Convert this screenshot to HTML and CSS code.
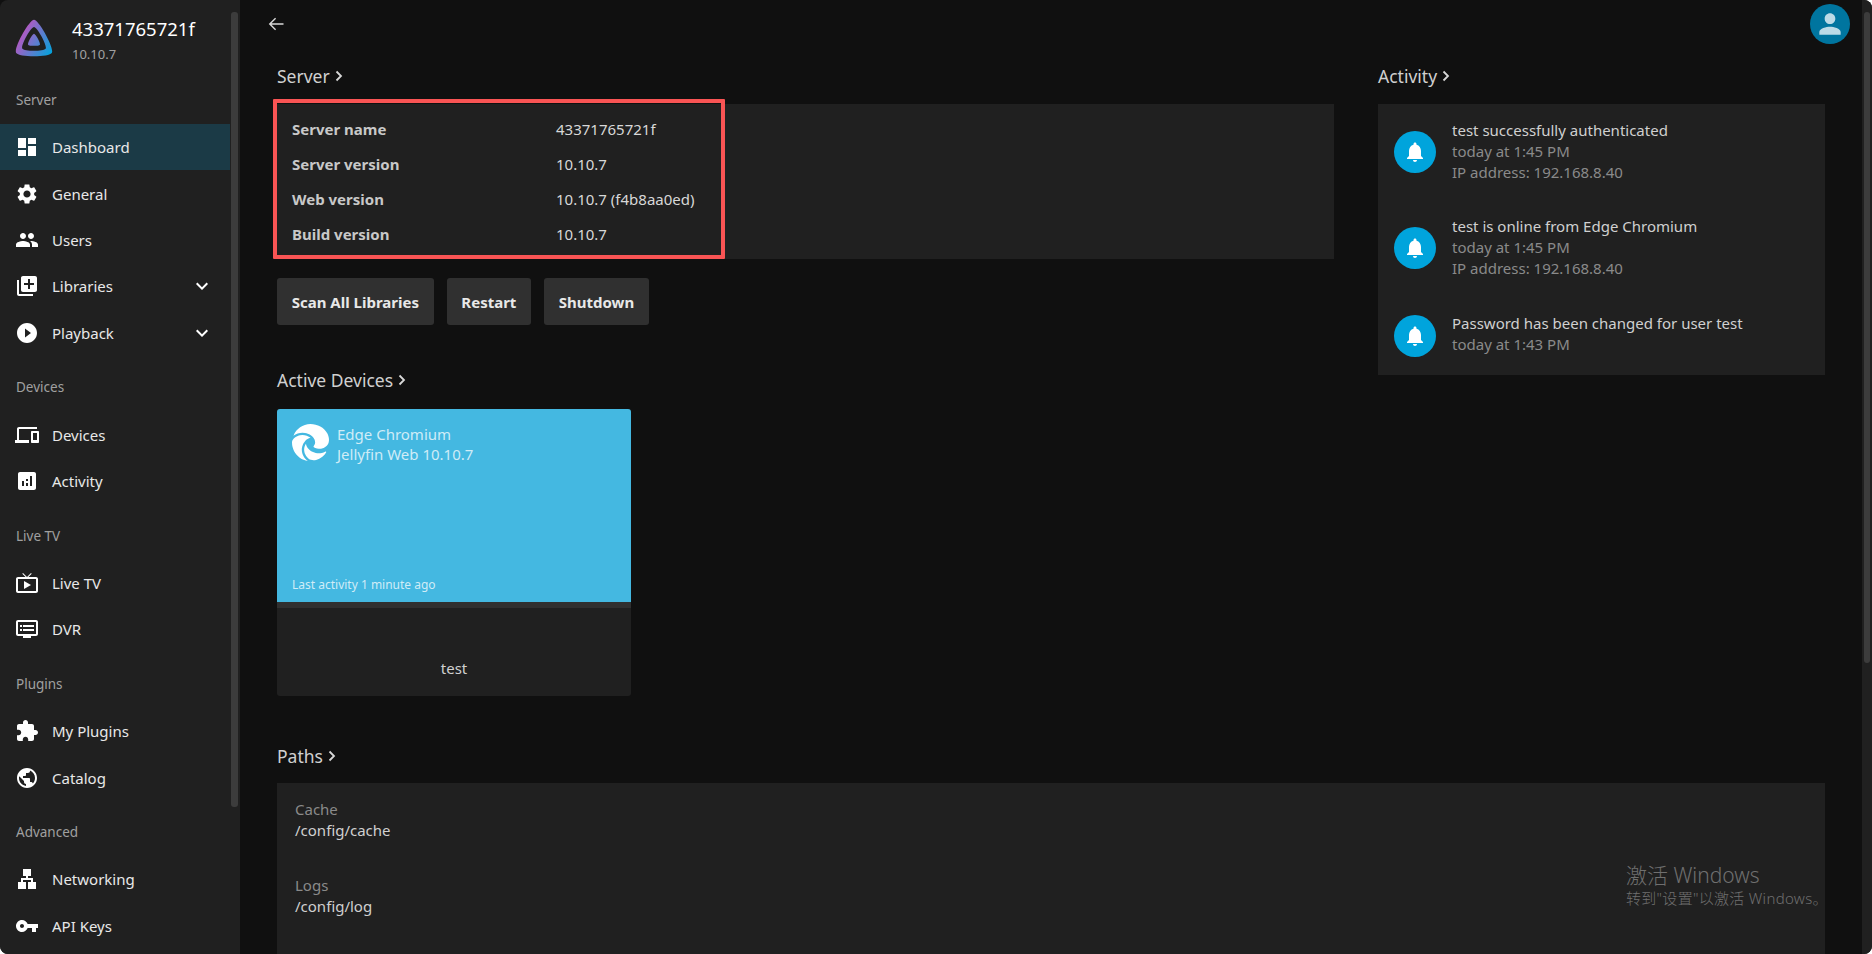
FILE: index.html
```html
<!DOCTYPE html>
<html lang="en">
<head>
    <meta charset="UTF-8">
    <title>Dashboard</title>
    <link rel="stylesheet" href="styles.css">
</head>
<body>
    <div class="app">
        <aside class="sidebar">
            <div class="sidebar-scroll">
                <div class="brand">
                    <svg class="brand-logo" viewBox="0 0 512 512">
                        <defs>
                            <linearGradient id="jf" gradientUnits="userSpaceOnUse" x1="110" y1="220" x2="495" y2="440">
                                <stop offset="0" stop-color="#aa5cc3"/>
                                <stop offset="1" stop-color="#00a4dc"/>
                            </linearGradient>
                        </defs>
                        <path fill="url(#jf)" d="M256 201.6c-20.4 0-86.2 119.3-76.2 139.4s142.5 19.9 152.4 0S276.5 201.6 256 201.6z"/>
                        <path fill="url(#jf)" d="M256 23.3c-61.6 0-259.8 359.4-229.6 420.1s429.3 60 459.2 0S317.6 23.3 256 23.3zM406.5 390.8c-19.6 39.3-281.1 39.8-300.9 0s110.1-275.3 150.4-275.3 170.1 235.9 150.5 275.3z"/>
                    </svg>
                    <div>
                        <div class="brand-name">43371765721f</div>
                        <div class="brand-version">10.10.7</div>
                    </div>
                </div>

                <div class="nav-group">
                    <div class="nav-title">Server</div>
                    <a class="nav-item selected"><svg viewBox="0 0 24 24"><path d="M3 13h8V3H3v10zm0 8h8v-6H3v6zm10 0h8V11h-8v10zm0-18v6h8V3h-8z"/></svg>Dashboard</a>
                    <a class="nav-item"><svg viewBox="0 0 24 24"><path d="M19.14 12.94c.04-.3.06-.61.06-.94 0-.32-.02-.64-.07-.94l2.03-1.58c.18-.14.23-.41.12-.61l-1.92-3.32c-.12-.22-.37-.29-.59-.22l-2.39.96c-.5-.38-1.03-.7-1.62-.94l-.36-2.54c-.04-.24-.24-.41-.48-.41h-3.84c-.24 0-.43.17-.47.41l-.36 2.54c-.59.24-1.13.57-1.62.94l-2.39-.96c-.22-.08-.47 0-.59.22L2.74 8.87c-.12.21-.08.47.12.61l2.03 1.58c-.05.3-.09.63-.09.94s.02.64.07.94l-2.03 1.58c-.18.14-.23.41-.12.61l1.92 3.32c.12.22.37.29.59.22l2.39-.96c.5.38 1.03.7 1.62.94l.36 2.54c.05.24.24.41.48.41h3.84c.24 0 .44-.17.47-.41l.36-2.54c.59-.24 1.13-.56 1.62-.94l2.39.96c.22.08.47 0 .59-.22l1.92-3.32c.12-.22.07-.47-.12-.61l-2.01-1.58zM12 15.6c-1.98 0-3.6-1.62-3.6-3.6s1.62-3.6 3.6-3.6 3.6 1.62 3.6 3.6-1.62 3.6-3.6 3.6z"/></svg>General</a>
                    <a class="nav-item"><svg viewBox="0 0 24 24"><path d="M16 11c1.66 0 2.99-1.34 2.99-3S17.66 5 16 5c-1.66 0-3 1.34-3 3s1.34 3 3 3zm-8 0c1.66 0 2.99-1.34 2.99-3S9.66 5 8 5C6.34 5 5 6.34 5 8s1.34 3 3 3zm0 2c-2.33 0-7 1.17-7 3.5V19h14v-2.5c0-2.33-4.67-3.5-7-3.5zm8 0c-.29 0-.62.02-.97.05 1.16.84 1.97 1.97 1.97 3.45V19h6v-2.5c0-2.33-4.67-3.5-7-3.5z"/></svg>Users</a>
                    <a class="nav-item"><svg viewBox="0 0 24 24"><path d="M4 6H2v14c0 1.1.9 2 2 2h14v-2H4V6zm16-4H8c-1.1 0-2 .9-2 2v12c0 1.1.9 2 2 2h12c1.1 0 2-.9 2-2V4c0-1.1-.9-2-2-2zm-1 9h-4v4h-2v-4H9V9h4V5h2v4h4v2z"/></svg>Libraries<svg class="nav-expand" viewBox="0 0 24 24"><path d="M16.59 8.59 12 13.17 7.41 8.59 6 10l6 6 6-6z"/></svg></a>
                    <a class="nav-item"><svg viewBox="0 0 24 24"><path d="M12 2C6.48 2 2 6.48 2 12s4.48 10 10 10 10-4.48 10-10S17.52 2 12 2zm-2 14.5v-9l6 4.5-6 4.5z"/></svg>Playback<svg class="nav-expand" viewBox="0 0 24 24"><path d="M16.59 8.59 12 13.17 7.41 8.59 6 10l6 6 6-6z"/></svg></a>
                </div>

                <div class="nav-group">
                    <div class="nav-title">Devices</div>
                    <a class="nav-item"><svg viewBox="0 0 24 24"><path d="M4 6h18V4H4c-1.1 0-2 .9-2 2v11H0v3h14v-3H4V6zm19 2h-6c-.55 0-1 .45-1 1v10c0 .55.45 1 1 1h6c.55 0 1-.45 1-1V9c0-.55-.45-1-1-1zm-1 9h-4v-7h4v7z"/></svg>Devices</a>
                    <a class="nav-item"><svg viewBox="0 0 24 24"><path d="M19 3H5c-1.1 0-2 .9-2 2v14c0 1.1.9 2 2 2h14c1.1 0 2-.9 2-2V5c0-1.1-.9-2-2-2zM9 17H7v-5h2v5zm4 0h-2v-3h2v3zm0-5h-2v-2h2v2zm4 5h-2V7h2v10z"/></svg>Activity</a>
                </div>

                <div class="nav-group">
                    <div class="nav-title">Live TV</div>
                    <a class="nav-item"><svg viewBox="0 0 24 24"><path d="M21 6h-7.59l3.29-3.29L16 2l-4 4-4-4-.71.71L10.59 6H3c-1.1 0-2 .89-2 2v12c0 1.1.9 2 2 2h18c1.1 0 2-.9 2-2V8c0-1.11-.9-2-2-2zm0 14H3V8h18v12zM9 10v8l7-4z"/></svg>Live TV</a>
                    <a class="nav-item"><svg viewBox="0 0 24 24"><path d="M21 3H3c-1.1 0-2 .9-2 2v12c0 1.1.9 2 2 2h5v2h8v-2h5c1.1 0 1.99-.9 1.99-2L23 5c0-1.1-.9-2-2-2zm0 14H3V5h18v12zm-2-9H8v2h11V8zm0 4H8v2h11v-2zM7 8H5v2h2V8zm0 4H5v2h2v-2z"/></svg>DVR</a>
                </div>

                <div class="nav-group">
                    <div class="nav-title">Plugins</div>
                    <a class="nav-item"><svg viewBox="0 0 24 24"><path d="M20.5 11H19V7c0-1.1-.9-2-2-2h-4V3.5C13 2.12 11.88 1 10.5 1S8 2.12 8 3.5V5H4c-1.1 0-1.99.9-1.99 2v3.8H3.5c1.49 0 2.7 1.21 2.7 2.7s-1.21 2.7-2.7 2.7H2V20c0 1.1.9 2 2 2h3.8v-1.5c0-1.49 1.21-2.7 2.7-2.7 1.49 0 2.7 1.21 2.7 2.7V22H17c1.1 0 2-.9 2-2v-4h1.5c1.38 0 2.5-1.12 2.5-2.5S21.88 11 20.5 11z"/></svg>My Plugins</a>
                    <a class="nav-item"><svg viewBox="0 0 24 24"><path d="M12 2C6.48 2 2 6.48 2 12s4.48 10 10 10 10-4.48 10-10S17.52 2 12 2zm-1 17.93c-3.95-.49-7-3.85-7-7.93 0-.62.08-1.21.21-1.79L9 15v1c0 1.1.9 2 2 2v1.93zm6.9-2.54c-.26-.81-1-1.39-1.9-1.39h-1v-3c0-.55-.45-1-1-1H8v-2h2c.55 0 1-.45 1-1V7h2c1.1 0 2-.9 2-2v-.41c2.93 1.19 5 4.06 5 7.41 0 2.08-.8 3.97-2.1 5.39z"/></svg>Catalog</a>
                </div>

                <div class="nav-group">
                    <div class="nav-title">Advanced</div>
                    <a class="nav-item"><svg viewBox="0 0 24 24"><path d="M13 22h8v-7h-3v-4h-5V9h3V2H8v7h3v2H6v4H3v7h8v-7H8v-2h8v2h-3z"/></svg>Networking</a>
                    <a class="nav-item"><svg viewBox="0 0 24 24"><path d="M12.65 10C11.83 7.67 9.61 6 7 6c-3.31 0-6 2.69-6 6s2.69 6 6 6c2.61 0 4.83-1.67 5.65-4H17v4h4v-4h2v-4H12.65zM7 14c-1.1 0-2-.9-2-2s.9-2 2-2 2 .9 2 2-.9 2-2 2z"/></svg>API Keys</a>
                </div>
            </div>
            <div class="scrollbar scrollbar-nav"><div class="scrollbar-thumb"></div></div>
        </aside>

        <main class="main">
            <div class="content">
                <header class="topbar">
                    <svg class="back-icon" viewBox="0 0 24 24"><path d="M21 12H4.5M11.5 5l-7 7 7 7"/></svg>
                    <div class="avatar"><svg viewBox="0 0 24 24"><path d="M12 12c2.21 0 4-1.79 4-4s-1.79-4-4-4-4 1.79-4 4 1.79 4 4 4zm0 2c-2.67 0-8 1.34-8 4v2h16v-2c0-2.66-5.33-4-8-4z"/></svg></div>
                </header>

                <div class="columns">
                    <div class="col-left">
                        <h3 class="section-title">Server <svg class="chev" viewBox="0 0 10 12"><path d="M2.5 1.5 7 6l-4.5 4.5"/></svg></h3>
                        <div class="card info-card">
                            <div class="info-row"><b>Server name</b><span>43371765721f</span></div>
                            <div class="info-row"><b>Server version</b><span>10.10.7</span></div>
                            <div class="info-row"><b>Web version</b><span>10.10.7 (f4b8aa0ed)</span></div>
                            <div class="info-row"><b>Build version</b><span>10.10.7</span></div>
                            <div class="highlight"></div>
                        </div>
                        <div class="button-row">
                            <button>Scan All Libraries</button>
                            <button>Restart</button>
                            <button>Shutdown</button>
                        </div>

                        <h3 class="section-title devices-title">Active Devices <svg class="chev" viewBox="0 0 10 12"><path d="M2.5 1.5 7 6l-4.5 4.5"/></svg></h3>
                        <div class="device-card">
                            <div class="device-top">
                                <div class="device-head">
                                    <svg class="edge-logo" viewBox="0 0 24 24"><path d="M21.86 17.86q.14 0 .25.12.1.13.1.25t-.11.33l-.32.46-.43.53-.44.5q-.21.25-.38.42l-.22.23q-.58.53-1.34 1.04-.76.51-1.6.91-.86.4-1.74.64t-1.67.24q-.9 0-1.69-.28-.8-.28-1.48-.78-.68-.5-1.22-1.17-.53-.66-.92-1.44-.38-.77-.58-1.6-.2-.83-.2-1.67 0-1 .32-1.96.33-.97.87-1.8.14.95.55 1.77.41.82 1.02 1.5.6.68 1.38 1.21.78.54 1.64.9.86.36 1.77.56.92.2 1.8.2 1.12 0 2.18-.24 1.06-.23 2.06-.72l.2-.1.2-.05zm-15.5-1.27q0 1.1.27 2.15.27 1.06.78 2.03.51.96 1.24 1.77.74.82 1.66 1.4-1.47-.2-2.8-.74-1.33-.55-2.48-1.37-1.15-.83-2.08-1.9-.92-1.07-1.58-2.33T.36 14.94Q0 13.54 0 12.06q0-.81.32-1.49.31-.68.83-1.23.53-.55 1.2-.96.66-.4 1.35-.66.74-.27 1.5-.39.78-.12 1.55-.12.7 0 1.42.1.72.12 1.4.35.68.23 1.32.57.63.35 1.16.83-.35 0-.7.07-.33.07-.65.23v-.02q-.63.28-1.2.74-.57.46-1.05 1.04-.48.58-.87 1.26-.38.67-.65 1.39-.27.71-.42 1.44-.15.72-.15 1.38zM11.96.06q1.7 0 3.33.39 1.63.38 3.07 1.15 1.43.77 2.62 1.93 1.18 1.16 1.98 2.7.49.94.76 1.96.28 1 .28 2.08 0 .89-.23 1.7-.24.8-.69 1.48-.45.68-1.1 1.22-.64.53-1.45.88-.54.24-1.11.36-.58.13-1.16.13-.42 0-.97-.03-.54-.03-1.1-.12-.55-.1-1.05-.28-.5-.19-.84-.5-.12-.09-.23-.24-.1-.16-.1-.33 0-.15.16-.35.16-.2.35-.5.2-.28.36-.68.16-.4.16-.95 0-1.06-.4-1.96-.4-.91-1.06-1.64-.66-.74-1.52-1.28-.86-.55-1.79-.89-.84-.3-1.72-.44-.87-.14-1.76-.14-1.55 0-3.06.45T.94 7.55q.71-1.74 1.81-3.13 1.1-1.38 2.52-2.35Q6.68 1.1 8.37.58q1.7-.52 3.58-.52Z"/></svg>
                                    <div class="device-text">
                                        <div>Edge Chromium</div>
                                        <div>Jellyfin Web 10.10.7</div>
                                    </div>
                                </div>
                                <div class="device-activity">Last activity 1 minute ago</div>
                            </div>
                            <div class="device-progress"></div>
                            <div class="device-user">test</div>
                        </div>
                    </div>

                    <div class="col-right">
                        <h3 class="section-title">Activity <svg class="chev" viewBox="0 0 10 12"><path d="M2.5 1.5 7 6l-4.5 4.5"/></svg></h3>
                        <div class="card activity-card">
                            <div class="activity-item">
                                <div class="bell"><svg viewBox="0 0 24 24"><path d="M12 22c1.1 0 2-.9 2-2h-4c0 1.1.89 2 2 2zm6-6v-5c0-3.07-1.64-5.64-4.5-6.32V4c0-.83-.67-1.5-1.5-1.5s-1.5.67-1.5 1.5v.68C7.63 5.36 6 7.92 6 11v5l-2 2v1h16v-1l-2-2z"/></svg></div>
                                <div class="activity-text">
                                    <div>test successfully authenticated</div>
                                    <div class="muted">today at 1:45 PM</div>
                                    <div class="muted">IP address: 192.168.8.40</div>
                                </div>
                            </div>
                            <div class="activity-item">
                                <div class="bell"><svg viewBox="0 0 24 24"><path d="M12 22c1.1 0 2-.9 2-2h-4c0 1.1.89 2 2 2zm6-6v-5c0-3.07-1.64-5.64-4.5-6.32V4c0-.83-.67-1.5-1.5-1.5s-1.5.67-1.5 1.5v.68C7.63 5.36 6 7.92 6 11v5l-2 2v1h16v-1l-2-2z"/></svg></div>
                                <div class="activity-text">
                                    <div>test is online from Edge Chromium</div>
                                    <div class="muted">today at 1:45 PM</div>
                                    <div class="muted">IP address: 192.168.8.40</div>
                                </div>
                            </div>
                            <div class="activity-item">
                                <div class="bell"><svg viewBox="0 0 24 24"><path d="M12 22c1.1 0 2-.9 2-2h-4c0 1.1.89 2 2 2zm6-6v-5c0-3.07-1.64-5.64-4.5-6.32V4c0-.83-.67-1.5-1.5-1.5s-1.5.67-1.5 1.5v.68C7.63 5.36 6 7.92 6 11v5l-2 2v1h16v-1l-2-2z"/></svg></div>
                                <div class="activity-text">
                                    <div>Password has been changed for user test</div>
                                    <div class="muted">today at 1:43 PM</div>
                                </div>
                            </div>
                        </div>
                    </div>
                </div>

                <h3 class="section-title paths-title">Paths <svg class="chev" viewBox="0 0 10 12"><path d="M2.5 1.5 7 6l-4.5 4.5"/></svg></h3>
                <div class="card paths-card">
                    <div class="path-item">
                        <div class="muted">Cache</div>
                        <div>/config/cache</div>
                    </div>
                    <div class="path-item">
                        <div class="muted">Logs</div>
                        <div>/config/log</div>
                    </div>
                </div>
            </div>
            <div class="scrollbar scrollbar-main"><div class="scrollbar-thumb"></div></div>
        </main>

        <div class="watermark">
            <div class="watermark-title">激活 Windows</div>
            <div class="watermark-sub">转到"设置"以激活 Windows。</div>
        </div>
    </div>
</body>
</html>
```

FILE: styles.css
```css
* {
    box-sizing: border-box;
}
html, body {
    height: 100%;
    margin: 0;
    background: #fff;
}
body {
    font-family: "Noto Sans", sans-serif;
    font-size: 15px;
    color: #e0e0e0;
    overflow: hidden;
}
.app {
    position: relative;
    display: flex;
    height: 954px;
    overflow: hidden;
    border-radius: 0 8px 8px 8px;
    background: #101010;
}

/* sidebar */
.sidebar {
    display: flex;
    flex: 0 0 240px;
    border-top-left-radius: 8px;
    background: #202020;
}
.sidebar-scroll {
    flex: 0 0 230px;
    overflow: hidden;
}
.brand {
    display: flex;
    align-items: center;
    height: 68.5px;
    padding: 8px 0 0 14px;
    color: #fff;
}
.brand-logo {
    width: 40px;
    height: 40px;
    margin-right: 18px;
}
.brand-name {
    margin-top: 4.6px;
    font-size: 18.5px;
    line-height: 25px;
}
.brand-version {
    margin-top: 2.4px;
    font-size: 13px;
    line-height: 21px;
    color: #a0a0a0;
}
.nav-group {
    padding-top: 7.5px;
}
.nav-title {
    height: 48px;
    line-height: 48px;
    padding-left: 16px;
    font-size: 13.5px;
    color: #a0a0a0;
}
.nav-item {
    display: flex;
    align-items: center;
    height: 46.4px;
    padding-left: 16px;
    font-size: 15px;
    color: #e8e8e8;
}
.nav-item svg {
    width: 24px;
    height: 24px;
    margin-left: -1px;
    margin-right: 13px;
    fill: #fff;
}
.nav-item svg.nav-expand {
    margin: 0 16px 0 auto;
}
.nav-item.selected {
    background: #1b3a46;
}

/* fake scrollbars */
.scrollbar {
    padding-top: 12px;
}
.scrollbar-nav {
    flex: 0 0 7px;
    margin-left: 1px;
}
.scrollbar-nav .scrollbar-thumb {
    height: 795px;
}
.scrollbar-main {
    flex: 0 0 10px;
    background: #202020;
    padding-left: 1.5px;
    padding-right: 2px;
}
.scrollbar-main .scrollbar-thumb {
    height: 651px;
}
.scrollbar-thumb {
    background: #3c3c3c;
    border-radius: 3px;
}

/* main */
.main {
    display: flex;
    flex: 1;
    min-width: 0;
}
.content {
    flex: 1;
    min-width: 0;
    padding: 0 37px;
}
.topbar {
    display: flex;
    justify-content: space-between;
    align-items: center;
    height: 48px;
    margin-left: -11px;
    margin-right: -25px;
}
.back-icon {
    width: 20px;
    height: 20px;
    fill: none;
    stroke: #d8d8d8;
    stroke-width: 1.7;
}
.avatar {
    display: flex;
    align-items: center;
    justify-content: center;
    width: 40px;
    height: 40px;
    border-radius: 50%;
    background: #00759f;
}
.avatar svg {
    width: 32px;
    height: 32px;
    fill: #bcdbe7;
}
.columns {
    display: grid;
    grid-template-columns: 1fr 447px;
    gap: 44px;
}
.section-title {
    display: flex;
    align-items: center;
    gap: 4px;
    height: 56px;
    margin: 0;
    font-size: 17.5px;
    font-weight: 400;
    color: #d0d0d0;
}
.chev {
    width: 10px;
    height: 12px;
    fill: none;
    stroke: #d8d8d8;
    stroke-width: 1.8;
}
.card {
    background: #202020;
}
.info-card {
    position: relative;
    height: 155px;
    padding: 7.5px 15px;
}
.info-row {
    display: flex;
    align-items: center;
    height: 35px;
    color: #d8d8d8;
}
.info-row b {
    flex: 0 0 264px;
    font-weight: 700;
    color: #c8c8c8;
}
.highlight {
    position: absolute;
    left: -4px;
    top: -5px;
    width: 452px;
    height: 160px;
    border: 4px solid #f95454;
    border-radius: 1px;
}
.button-row {
    display: flex;
    gap: 13px;
    margin-top: 19px;
}
.button-row button {
    height: 47px;
    padding: 0 14.7px;
    border: none;
    border-radius: 3px;
    background: #303030;
    color: #e8e8e8;
    font-family: inherit;
    font-size: 15px;
    font-weight: 700;
}
.devices-title {
    margin-top: 26px;
    height: 58px;
}
.device-card {
    width: 354px;
    height: 287px;
    border-radius: 3px;
    overflow: hidden;
    background: #202020;
}
.device-top {
    display: flex;
    flex-direction: column;
    justify-content: space-between;
    height: 193px;
    padding: 15px;
    background: #44b8e1;
    color: rgba(255, 255, 255, 0.75);
}
.device-head {
    display: flex;
    gap: 8px;
}
.edge-logo {
    width: 37px;
    height: 37px;
    fill: #fff;
}
.device-text {
    line-height: 20px;
}
.device-activity {
    font-size: 12px;
    line-height: 16px;
    margin-bottom: -6px;
}
.device-progress {
    height: 6px;
    background: #303030;
}
.device-user {
    margin-top: 50px;
    text-align: center;
    line-height: 20px;
    color: #d0d0d0;
}
.activity-card {
    height: 271px;
}
.activity-item {
    display: flex;
    align-items: center;
    height: 96px;
    padding-left: 16px;
}
.activity-item:last-child {
    height: 79px;
}
.bell {
    display: flex;
    align-items: center;
    justify-content: center;
    width: 42px;
    height: 42px;
    margin-right: 16px;
    border-radius: 50%;
    background: #00a4dc;
}
.bell svg {
    width: 24px;
    height: 24px;
    fill: #fff;
}
.activity-text {
    margin-top: -2px;
    line-height: 21px;
    color: #d0d0d0;
}
.activity-item:last-child .activity-text {
    margin-top: -4px;
}
.muted {
    color: #8a8a8a;
}
.paths-title {
    margin-top: 32px;
    height: 55px;
}
.paths-card {
    padding: 16px 18px;
}
.path-item {
    height: 76px;
    line-height: 21px;
    color: #d0d0d0;
}

/* windows activation note */
.watermark {
    position: absolute;
    left: 1626px;
    top: 862px;
    color: #6f6f6f;
    font-family: "Noto Sans", "Noto Sans CJK SC", sans-serif;
    font-weight: 300;
}
.watermark-title {
    font-size: 21px;
    line-height: 26px;
}
.watermark-sub {
    font-size: 15px;
    line-height: 20px;
    letter-spacing: 0.3px;
}
```
